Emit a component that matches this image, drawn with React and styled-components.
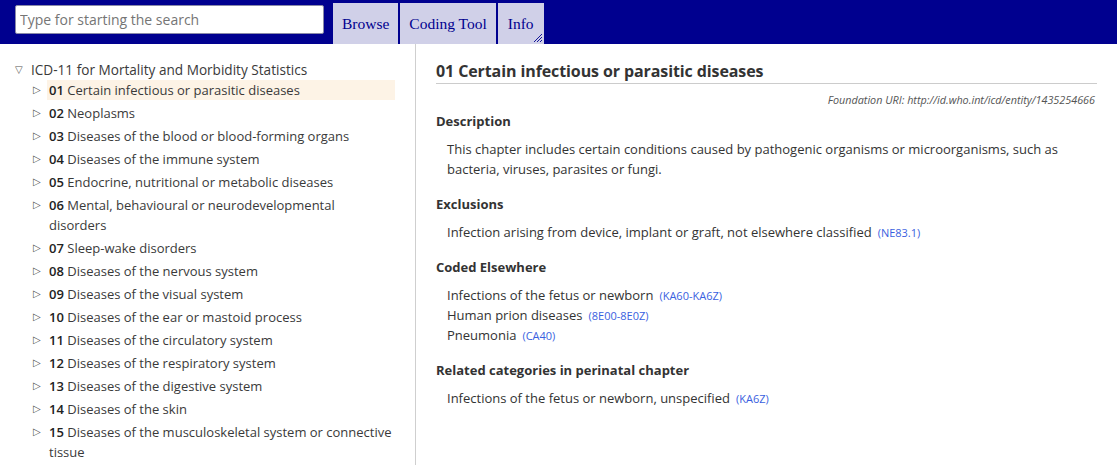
import React from "react";
import styled, { createGlobalStyle } from "styled-components";

const Global = createGlobalStyle`
  html, body { margin: 0; padding: 0; background: #fff; }
  body { font-family: "Open Sans", "Noto Sans", sans-serif; color: #333; }
  * { box-sizing: border-box; }
`;

const Page = styled.div`
  width: 1117px;
  height: 465px;
  overflow: hidden;
  display: flex;
  flex-direction: column;
`;

const Header = styled.div`
  height: 44px;
  background: #00008f;
  display: flex;
  align-items: flex-start;
  padding-left: 15px;
  flex-shrink: 0;
`;

const Search = styled.input`
  margin-top: 5px;
  width: 309px;
  height: 29px;
  border: 1px solid #8a8aa8;
  border-radius: 2px;
  padding: 0 4px;
  font-family: "Open Sans", sans-serif;
  font-size: 14px;
  color: #333;
  background: #fff;
  outline: none;
  &::placeholder { color: #757575; }
`;

const Tabs = styled.div`
  display: flex;
  gap: 2px;
  margin-left: 9px;
  margin-top: 3px;
`;

const Tab = styled.div`
  position: relative;
  height: 41px;
  padding: 0 ${p => p.$pad || 9}px;
  background: #d0d0e8;
  color: #00008f;
  font-family: "Liberation Serif", "Times New Roman", serif;
  font-size: 15.5px;
  display: flex;
  align-items: center;
  padding-top: 1px;
`;

const Grip = styled.svg`
  position: absolute;
  right: 1px;
  bottom: 1px;
`;

const Body = styled.div`
  flex: 1;
  display: flex;
  min-height: 0;
`;

const Left = styled.div`
  width: 416px;
  flex-shrink: 0;
  border-right: 1px solid #cfcfcf;
  padding: 16px 20px 0 15px;
  overflow: hidden;
`;

const Node = styled.div`
  display: flex;
  align-items: flex-start;
  font-size: ${p => p.$size || 13}px;
  line-height: 20px;
  color: #3a3a3a;
`;

const Toggle = styled.span`
  width: 16px;
  flex-shrink: 0;
  font-size: 10px;
  color: #555;
  line-height: 20px;
  font-family: "DejaVu Sans", sans-serif;
`;

const Children = styled.div`
  padding-left: 18px;
  display: flex;
  flex-direction: column;
  gap: 3px;
`;

const Label = styled.span`
  flex: 1;
  background: ${p => (p.$active ? "#fdf3e6" : "transparent")};
  margin-left: -2px;
  padding-left: 2px;
`;

const Code = styled.b`
  font-weight: 600;
  color: #222;
`;

const Right = styled.div`
  flex: 1;
  padding: 15px 20px 0 20px;
`;

const Title = styled.h1`
  margin: 0;
  font-size: 16px;
  font-weight: 700;
  color: #333;
  line-height: 24px;
  border-bottom: 1px solid #cccccc;
  letter-spacing: -0.1px;
`;

const Uri = styled.div`
  text-align: right;
  font-size: 10.8px;
  font-style: italic;
  color: #555;
  margin-top: 9px;
  line-height: 14px;
  padding-right: 2px;
`;

const Section = styled.h2`
  margin: ${p => p.$top ?? 15}px 0 0 0;
  font-size: 13px;
  font-weight: 700;
  color: #333;
  line-height: 20px;
`;

const Block = styled.div`
  padding-left: 11px;
  margin-top: 8px;
  font-size: 13px;
  line-height: 20px;
  color: #333;
`;

const Item = styled.div`
  height: 20px;
`;

const Ref = styled.span`
  color: #3a5fe0;
  font-size: 11px;
  line-height: 1;
  margin-left: 6px;
`;

const chapters = [
  ["01", "Certain infectious or parasitic diseases", true],
  ["02", "Neoplasms"],
  ["03", "Diseases of the blood or blood-forming organs"],
  ["04", "Diseases of the immune system"],
  ["05", "Endocrine, nutritional or metabolic diseases"],
  ["06", "Mental, behavioural or neurodevelopmental disorders"],
  ["07", "Sleep-wake disorders"],
  ["08", "Diseases of the nervous system"],
  ["09", "Diseases of the visual system"],
  ["10", "Diseases of the ear or mastoid process"],
  ["11", "Diseases of the circulatory system"],
  ["12", "Diseases of the respiratory system"],
  ["13", "Diseases of the digestive system"],
  ["14", "Diseases of the skin"],
  ["15", "Diseases of the musculoskeletal system or connective tissue"],
];

export default function App() {
  return (
    <Page>
      <Global />
      <Header>
        <Search placeholder="Type for starting the search" />
        <Tabs>
          <Tab>Browse</Tab>
          <Tab>Coding Tool</Tab>
          <Tab $pad={10}>
            Info
            <Grip width="10" height="10" viewBox="0 0 10 10">
              <path d="M9 1 L1 9 M9 4 L4 9 M9 7 L7 9" stroke="#00008f" strokeWidth="0.9" fill="none" />
            </Grip>
          </Tab>
        </Tabs>
      </Header>
      <Body>
        <Left>
          <Node $size={13.6}>
            <Toggle>▽</Toggle>
            <span>ICD-11 for Mortality and Morbidity Statistics</span>
          </Node>
          <Children>
            {chapters.map(([c, t, a]) => (
              <Node key={c}>
                <Toggle>▷</Toggle>
                <Label $active={a}>
                  <Code>{c}</Code> {t}
                </Label>
              </Node>
            ))}
          </Children>
        </Left>
        <Right>
          <Title>01 Certain infectious or parasitic diseases</Title>
          <Uri>Foundation URI: http://id.who.int/icd/entity/1435254666</Uri>
          <Section $top={4}>Description</Section>
          <Block>
            This chapter includes certain conditions caused by pathogenic organisms or microorganisms, such as bacteria, viruses, parasites or fungi.
          </Block>
          <Section>Exclusions</Section>
          <Block>
            <Item>Infection arising from device, implant or graft, not elsewhere classified<Ref>(NE83.1)</Ref></Item>
          </Block>
          <Section>Coded Elsewhere</Section>
          <Block>
            <Item>Infections of the fetus or newborn<Ref>(KA60-KA6Z)</Ref></Item>
            <Item>Human prion diseases<Ref>(8E00-8E0Z)</Ref></Item>
            <Item>Pneumonia<Ref>(CA40)</Ref></Item>
          </Block>
          <Section>Related categories in perinatal chapter</Section>
          <Block>
            <Item>Infections of the fetus or newborn, unspecified<Ref>(KA6Z)</Ref></Item>
          </Block>
        </Right>
      </Body>
    </Page>
  );
}
